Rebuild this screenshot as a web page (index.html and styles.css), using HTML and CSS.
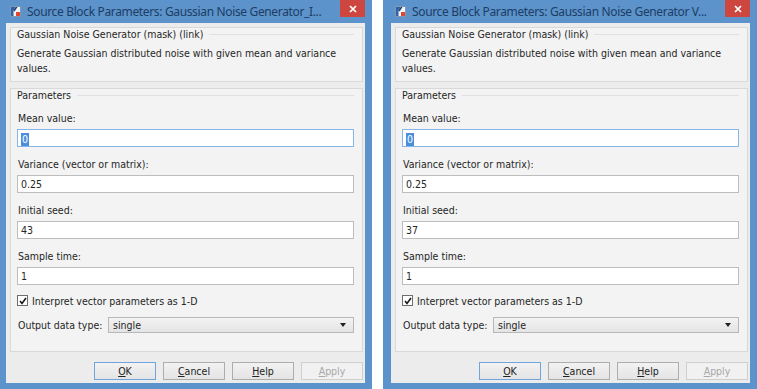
FILE: index.html
```html
<!DOCTYPE html>
<html>
<head>
<meta charset="utf-8">
<link rel="stylesheet" href="styles.css">
</head>
<body>
<div class="screen">
  <div class="dialog dialog--left">
    <div class="titlebar">
      <svg class="app-icon" width="11" height="11" viewBox="0 0 11 11"><rect x="0.5" y="0.5" width="10" height="10" fill="#eef3f9" stroke="#7f98b6"/><path d="M1 1H6L3.5 4.5V10H1Z" fill="#2f63a8"/><path d="M3.5 4.5L6 1H7.5L4.5 5.5Z" fill="#16365f"/><rect x="6" y="6" width="4" height="4" fill="#e2462c"/></svg>
      <span class="title">Source Block Parameters: Gaussian Noise Generator_I...</span>
      <span class="close"><svg width="8" height="8" viewBox="0 0 8 8"><path d="M1 1L7 7M7 1L1 7" stroke="#fff" stroke-width="1.7"/></svg></span>
    </div>
    <div class="client">
      <section class="panel panel--info">
        <div class="panel-head"><span>Gaussian Noise Generator (mask) (link)</span></div>
        <p class="desc">Generate Gaussian distributed noise with given mean and variance<br>values.</p>
      </section>
      <section class="panel panel--params">
        <div class="panel-head panel-head--tall"><span>Parameters</span></div>
        <div class="fields">
          <div class="field"><div class="label">Mean value:</div><div class="input input--focus"><span class="sel">0</span></div></div>
          <div class="field"><div class="label">Variance (vector or matrix):</div><div class="input">0.25</div></div>
          <div class="field"><div class="label">Initial seed:</div><div class="input">43</div></div>
          <div class="field"><div class="label">Sample time:</div><div class="input">1</div></div>
        </div>
        <div class="check"><span class="box"><svg width="8" height="8" viewBox="0 0 8 8"><path d="M1 4L3 6.5L7 1" fill="none" stroke="#1a1a1a" stroke-width="1.6"/></svg></span>Interpret vector parameters as 1-D</div>
        <div class="select-row"><span class="select-label">Output data type:</span><div class="select"><span>single</span><span class="arrow"></span></div></div>
      </section>
      <div class="buttons">
        <span class="btn btn--default"><u>O</u>K</span>
        <span class="btn"><u>C</u>ancel</span>
        <span class="btn"><u>H</u>elp</span>
        <span class="btn btn--disabled"><u>A</u>pply</span>
      </div>
    </div>
  </div>

  <div class="dialog">
    <div class="titlebar">
      <svg class="app-icon" width="11" height="11" viewBox="0 0 11 11"><rect x="0.5" y="0.5" width="10" height="10" fill="#eef3f9" stroke="#7f98b6"/><path d="M1 1H6L3.5 4.5V10H1Z" fill="#2f63a8"/><path d="M3.5 4.5L6 1H7.5L4.5 5.5Z" fill="#16365f"/><rect x="6" y="6" width="4" height="4" fill="#e2462c"/></svg>
      <span class="title">Source Block Parameters: Gaussian Noise Generator V...</span>
      <span class="close"><svg width="8" height="8" viewBox="0 0 8 8"><path d="M1 1L7 7M7 1L1 7" stroke="#fff" stroke-width="1.7"/></svg></span>
    </div>
    <div class="client">
      <section class="panel panel--info">
        <div class="panel-head"><span>Gaussian Noise Generator (mask) (link)</span></div>
        <p class="desc">Generate Gaussian distributed noise with given mean and variance<br>values.</p>
      </section>
      <section class="panel panel--params">
        <div class="panel-head panel-head--tall"><span>Parameters</span></div>
        <div class="fields">
          <div class="field"><div class="label">Mean value:</div><div class="input input--focus"><span class="sel">0</span></div></div>
          <div class="field"><div class="label">Variance (vector or matrix):</div><div class="input">0.25</div></div>
          <div class="field"><div class="label">Initial seed:</div><div class="input">37</div></div>
          <div class="field"><div class="label">Sample time:</div><div class="input">1</div></div>
        </div>
        <div class="check"><span class="box"><svg width="8" height="8" viewBox="0 0 8 8"><path d="M1 4L3 6.5L7 1" fill="none" stroke="#1a1a1a" stroke-width="1.6"/></svg></span>Interpret vector parameters as 1-D</div>
        <div class="select-row"><span class="select-label">Output data type:</span><div class="select"><span>single</span><span class="arrow"></span></div></div>
      </section>
      <div class="buttons">
        <span class="btn btn--default"><u>O</u>K</span>
        <span class="btn"><u>C</u>ancel</span>
        <span class="btn"><u>H</u>elp</span>
        <span class="btn btn--disabled"><u>A</u>pply</span>
      </div>
    </div>
  </div>
</div>
</body>
</html>
```

FILE: styles.css
```css
* { box-sizing: border-box; }

html, body {
  margin: 0;
  padding: 0;
  background: #ffffff;
}

body {
  width: 757px;
  height: 389px;
  overflow: hidden;
  font-family: "DejaVu Sans Condensed", "DejaVu Sans", sans-serif;
  font-size: 10.5px;
  color: #262626;
}

.screen {
  display: grid;
  grid-template-columns: 374px 374px;
  column-gap: 11px;
  margin-left: -2px;
}

.dialog {
  height: 389px;
  background: #5c93ca;
  display: flex;
  flex-direction: column;
  padding: 0 7px 6px 8px;
}

.titlebar {
  height: 23px;
  display: flex;
  align-items: flex-start;
}

.app-icon {
  margin-left: 4px;
  margin-top: 6px;
  flex: none;
}

.title {
  margin-left: 6px;
  font-family: "Noto Sans", "Open Sans", sans-serif;
  font-size: 12px;
  letter-spacing: -0.35px;
  line-height: 23px;
  color: #1c3d66;
  white-space: nowrap;
  overflow: hidden;
  flex: 1;
}

.close {
  margin-left: 6px;
  width: 25px;
  height: 17px;
  background: #cd4740;
  display: flex;
  align-items: center;
  justify-content: center;
  flex: none;
}

.client {
  flex: 1;
  background: #ececec;
  padding: 4px 2px 3px 4px;
  display: flex;
  flex-direction: column;
}

.panel {
  border: 1px solid #d9d9d9;
  background: #f3f3f3;
  padding: 0 8px 5px 6px;
}

.panel--params {
  margin-top: 6px;
  padding-bottom: 18px;
}

.panel-head {
  height: 12px;
  line-height: 12px;
  display: flex;
  align-items: center;
  white-space: nowrap;
}

.panel-head--tall {
  height: 13px;
  line-height: 13px;
}

.panel-head::after {
  content: "";
  flex: 1;
  height: 1px;
  background: #e1e1e1;
  margin-left: 6px;
}

.desc {
  margin: 6px 0 0;
  line-height: 15px;
  white-space: nowrap;
}

.fields {
  margin-top: 10px;
  display: flex;
  flex-direction: column;
  gap: 11px;
}

.label {
  line-height: 13px;
  height: 13px;
  padding-left: 1px;
  white-space: nowrap;
}

.input {
  margin-top: 4px;
  height: 18px;
  background: #ffffff;
  border: 1px solid #bdbdbd;
  padding-left: 3px;
  line-height: 16px;
}

.input--focus {
  border-color: #87b6e6;
}

.sel {
  display: inline-block;
  background: #4b8fdc;
  color: #ffffff;
  line-height: 13px;
  padding: 0 1px;
  vertical-align: middle;
}

.check {
  margin-top: 9px;
  height: 13px;
  display: flex;
  align-items: center;
  white-space: nowrap;
}

.box {
  width: 11px;
  height: 11px;
  border: 1px solid #6e6e6e;
  background: #ffffff;
  display: flex;
  align-items: center;
  justify-content: center;
  margin-right: 4px;
}

.select-row {
  margin-top: 10px;
  height: 16px;
  display: flex;
  align-items: center;
}

.select-label {
  width: 91px;
  padding-left: 1px;
  white-space: nowrap;
  flex: none;
}

.select {
  flex: 1;
  height: 16px;
  border: 1px solid #b8b8b8;
  background: linear-gradient(#f3f3f3, #e4e4e4);
  display: flex;
  align-items: center;
  justify-content: space-between;
  padding: 0 7px 0 4px;
}

.arrow {
  width: 0;
  height: 0;
  border-left: 3px solid transparent;
  border-right: 3px solid transparent;
  border-top: 4px solid #222;
}

.buttons {
  margin-top: 10px;
  height: 18px;
  display: flex;
  justify-content: flex-end;
  gap: 7px;
}

.btn {
  width: 62px;
  height: 18px;
  border: 1px solid #adadad;
  background: linear-gradient(#f2f2f2, #e4e4e4);
  display: flex;
  align-items: center;
  justify-content: center;
  color: #222;
}

.btn--default {
  border-color: #6fa5dc;
}

.btn--disabled {
  color: #a8a8a8;
  border-color: #cfcfcf;
  background: #f1f1f1;
}
```
